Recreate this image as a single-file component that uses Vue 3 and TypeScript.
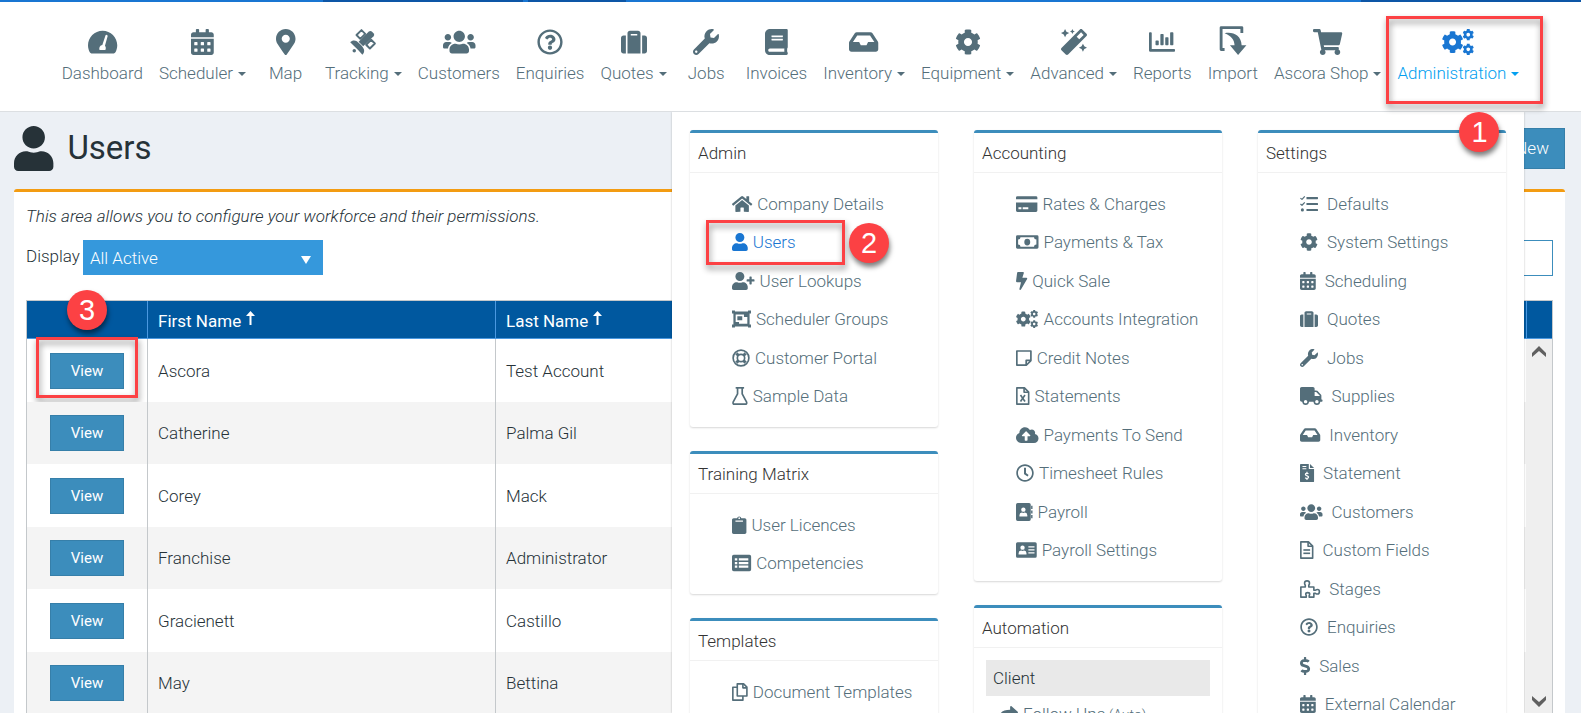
<script setup lang="ts">
import { computed, defineComponent, h, ref } from 'vue'

interface Glyph { w: number; fill?: string[]; line?: string[]; sw?: number }

const USER = 'M224 256c70.7 0 128-57.3 128-128S294.7 0 224 0 96 57.3 96 128s57.3 128 128 128zm89.6 32h-16.7c-22.2 10.2-46.9 16-72.9 16s-50.6-5.8-72.9-16h-16.7C60.2 288 0 348.2 0 422.4V464c0 26.5 21.5 48 48 48h352c26.5 0 48-21.5 48-48v-41.6c0-74.2-60.2-134.4-134.4-134.4z'
const COG = 'M487.4 315.7l-42.6-24.6c4.3-23.2 4.3-47 0-70.2l42.6-24.6c4.9-2.8 7.1-8.6 5.5-14-11.1-35.6-30-67.8-54.7-94.6-3.8-4.1-10-5.1-14.8-2.3L380.8 110c-17.9-15.4-38.5-27.3-60.8-35.1V25.8c0-5.6-3.9-10.5-9.4-11.7-36.7-8.2-74.3-7.8-109.2 0-5.5 1.2-9.4 6.1-9.4 11.7V75c-22.2 7.9-42.8 19.8-60.8 35.1L88.7 85.5c-4.9-2.8-11-1.9-14.8 2.3-24.7 26.7-43.6 58.9-54.7 94.6-1.7 5.4.6 11.2 5.5 14L67.3 221c-4.3 23.2-4.3 47 0 70.2l-42.6 24.6c-4.9 2.8-7.1 8.6-5.5 14 11.1 35.6 30 67.8 54.7 94.6 3.8 4.1 10 5.1 14.8 2.3l42.6-24.6c17.9 15.4 38.5 27.3 60.8 35.1v49.2c0 5.6 3.9 10.5 9.4 11.7 36.7 8.2 74.3 7.8 109.2 0 5.5-1.2 9.4-6.1 9.4-11.7v-49.2c22.2-7.9 42.8-19.8 60.8-35.1l42.6 24.6c4.9 2.8 11 1.9 14.8-2.3 24.7-26.7 43.6-58.9 54.7-94.6 1.5-5.5-.7-11.3-5.6-14.1zM256 336c-44.1 0-80-35.9-80-80s35.9-80 80-80 80 35.9 80 80-35.9 80-80 80z'
const cell = (x: number, y: number) => `M${x} ${y + 12}q0-12 12-12h40q12 0 12 12v40q0 12-12 12h-40q-12 0-12-12z`

const glyphs: Record<string, Glyph> = {
  gauge: { w: 576, fill: ['M288 32C128.94 32 0 160.94 0 320c0 52.8 14.25 102.26 39.06 144.8 5.61 9.62 16.3 15.2 27.44 15.2h443c11.14 0 21.83-5.58 27.44-15.2C561.75 422.26 576 372.8 576 320c0-159.06-128.94-288-288-288zM344 130a22 22 0 0 1 42 14L334 328c20 20 22 54 8 84H226c-14-46 10-90 56-96z'] },
  calendar: { w: 448, fill: [`M0 464c0 26.5 21.5 48 48 48h352c26.5 0 48-21.5 48-48V192H0v272z${cell(320, 256)}${cell(320, 384)}${cell(192, 256)}${cell(192, 384)}${cell(64, 256)}${cell(64, 384)}M400 64h-48V16c0-8.8-7.2-16-16-16h-32c-8.8 0-16 7.2-16 16v48H160V16c0-8.8-7.2-16-16-16h-32c-8.8 0-16 7.2-16 16v48H48C21.5 64 0 85.5 0 112v48h448v-48c0-26.5-21.5-48-48-48z`] },
  marker: { w: 384, fill: ['M172.268 501.67C26.97 291.031 0 269.413 0 192 0 85.961 85.961 0 192 0s192 85.961 192 192c0 77.413-26.97 99.031-172.268 309.67-9.535 13.774-29.93 13.773-39.464 0zM192 272c44.183 0 80-35.817 80-80s-35.817-80-80-80-80 35.817-80 80 35.817 80 80 80z'] },
  satellite: { w: 512, sw: 38, fill: ['M4 262C60 200 130 220 190 290C280 370 310 440 244 508L160 412L110 362z', 'M260 340L170 250 370 50Q400 24 430 50L468 88Q490 116 464 142z', 'M50 430a34 34 0 1 0 68 0a34 34 0 1 0-68 0z'], line: ['M128 118L226 22 300 96 202 194z', 'M318 310L416 212 490 286 392 384z'] },
  users: { w: 640, fill: ['M96 224c35.3 0 64-28.7 64-64s-28.7-64-64-64-64 28.7-64 64 28.7 64 64 64zm448 0c35.3 0 64-28.7 64-64s-28.7-64-64-64-64 28.7-64 64 28.7 64 64 64zm32 32h-64c-17.6 0-33.5 7.1-45.1 18.6 40.3 22.1 68.9 62 75.1 109.4h66c17.7 0 32-14.3 32-32v-32c0-35.3-28.7-64-64-64zm-256 0c61.9 0 112-50.1 112-112S381.9 32 320 32 208 82.1 208 144s50.1 112 112 112zm76.8 32h-8.3c-20.8 10-43.9 16-68.5 16s-47.6-6-68.5-16h-8.3C179.6 288 128 339.6 128 403.2V432c0 26.5 21.5 48 48 48h288c26.5 0 48-21.5 48-48v-28.8c0-63.6-51.6-115.2-115.2-115.2zm-223.7-13.4C161.5 263.1 145.6 256 128 256H64c-35.3 0-64 28.7-64 64v32c0 17.7 14.3 32 32 32h65.9c6.3-47.4 34.9-87.3 75.2-109.4z'] },
  question: { w: 512, fill: ['M256 8C119.043 8 8 119.083 8 256c0 136.997 111.043 248 248 248s248-111.003 248-248C504 119.083 392.957 8 256 8zm0 448c-110.532 0-200-89.431-200-200 0-110.495 89.472-200 200-200 110.491 0 200 89.471 200 200 0 110.53-89.431 200-200 200zm107.244-255.2c0 67.052-72.421 68.084-72.421 92.863V300c0 6.627-5.373 12-12 12h-45.647c-6.627 0-12-5.373-12-12v-8.659c0-35.745 27.1-50.034 47.579-61.516 17.561-9.845 28.324-16.541 28.324-29.579 0-17.246-21.999-28.693-39.784-28.693-23.189 0-33.894 10.977-48.942 29.969-4.057 5.12-11.46 6.071-16.666 2.124l-27.824-21.098c-5.107-3.872-6.251-11.066-2.644-16.363C184.846 131.491 214.94 112 261.794 112c49.071 0 101.45 38.304 101.45 88.8zM298 368c0 23.159-18.841 42-42 42s-42-18.841-42-42 18.841-42 42-42 42 18.841 42 42z'] },
  suitcase: { w: 512, fill: ['M128 480h256V80c0-26.5-21.5-48-48-48H176c-26.5 0-48 21.5-48 48v400zm64-384h128v32H192V96zm320 80v256c0 26.5-21.5 48-48 48h-48V128h48c26.5 0 48 21.5 48 48zM96 480H48c-26.5 0-48-21.5-48-48V176c0-26.5 21.5-48 48-48h48v352z'] },
  wrench: { w: 512, fill: ['M507.73 109.1c-2.24-9.03-13.54-12.09-20.12-5.51l-74.36 74.36-67.88-11.31-11.31-67.88 74.36-74.36c6.62-6.62 3.43-17.9-5.66-20.16-47.38-11.74-99.55.91-136.58 37.93-39.64 39.64-50.55 97.1-34.05 147.2L18.74 402.76c-24.99 24.99-24.99 65.51 0 90.5 24.99 24.99 65.51 24.99 90.5 0l213.21-213.21c50.12 16.71 107.47 5.68 147.37-34.22 37.07-37.07 49.7-89.32 37.91-136.73zM64 472c-13.25 0-24-10.75-24-24 0-13.26 10.75-24 24-24s24 10.74 24 24c0 13.25-10.75 24-24 24z'] },
  book: { w: 448, fill: ['M448 360V24c0-13.3-10.7-24-24-24H96C43 0 0 43 0 96v320c0 53 43 96 96 96h328c13.3 0 24-10.7 24-24v-16c0-7.5-3.5-14.3-8.9-18.7-4.2-15.4-4.2-59.3 0-74.7 5.4-4.3 8.9-11.1 8.9-18.6zM128 134c0-3.3 2.7-6 6-6h212c3.3 0 6 2.7 6 6v20c0 3.3-2.7 6-6 6H134c-3.3 0-6-2.7-6-6v-20zm0 64c0-3.3 2.7-6 6-6h212c3.3 0 6 2.7 6 6v20c0 3.3-2.7 6-6 6H134c-3.3 0-6-2.7-6-6v-20zm253.4 250H96c-17.7 0-32-14.3-32-32 0-17.6 14.4-32 32-32h285.4c-1.9 17.1-1.9 46.9 0 64z'] },
  inbox: { w: 576, fill: ['M567.938 243.908L462.25 85.374A48.003 48.003 0 0 0 422.311 64H153.689a48 48 0 0 0-39.938 21.374L8.062 243.908A47.994 47.994 0 0 0 0 270.533V400c0 26.51 21.49 48 48 48h480c26.51 0 48-21.49 48-48V270.533a47.994 47.994 0 0 0-8.062-26.625zM162.252 128h251.497l85.333 128H376l-32 64H232l-32-64H76.918l85.334-128z'] },
  cog: { w: 512, fill: [COG] },
  cogs: { w: 640 },
  magic: { w: 512, fill: ['M224 96l16-32 32-16-32-16-16-32-16 32-32 16 32 16 16 32zM80 160l26.66-53.33L160 80l-53.34-26.67L80 0 53.34 53.33 0 80l53.34 26.67L80 160zm352 128l-26.66 53.33L352 368l53.34 26.67L432 448l26.66-53.33L512 368l-53.34-26.67L432 288zm70.62-193.77L417.77 9.38C411.53 3.12 403.34 0 395.15 0c-8.19 0-16.38 3.12-22.63 9.38L9.38 372.52c-12.5 12.5-12.5 32.76 0 45.25l84.85 84.85c6.25 6.25 14.44 9.37 22.62 9.37 8.19 0 16.38-3.12 22.63-9.37l363.14-363.15c12.5-12.48 12.5-32.75 0-45.24zM359.45 203.46l-50.91-50.91 86.6-86.6 50.91 50.91-86.6 86.6z'] },
  chart: { w: 512, fill: ['M332.8 320h38.4c6.4 0 12.8-6.4 12.8-12.8V172.8c0-6.4-6.4-12.8-12.8-12.8h-38.4c-6.4 0-12.8 6.4-12.8 12.8v134.4c0 6.4 6.4 12.8 12.8 12.8zm96 0h38.4c6.4 0 12.8-6.4 12.8-12.8V76.8c0-6.4-6.4-12.8-12.8-12.8h-38.4c-6.4 0-12.8 6.4-12.8 12.8v230.4c0 6.4 6.4 12.8 12.8 12.8zm-288 0h38.4c6.4 0 12.8-6.4 12.8-12.8v-70.4c0-6.4-6.4-12.8-12.8-12.8h-38.4c-6.4 0-12.8 6.4-12.8 12.8v70.4c0 6.4 6.4 12.8 12.8 12.8zm96 0h38.4c6.4 0 12.8-6.4 12.8-12.8V108.8c0-6.4-6.4-12.8-12.8-12.8h-38.4c-6.4 0-12.8 6.4-12.8 12.8v198.4c0 6.4 6.4 12.8 12.8 12.8zM496 394H54V80c0-8.84-7.16-16-16-16H16C7.16 64 0 71.16 0 80v336c0 17.67 14.33 32 32 32h464c8.84 0 16-7.16 16-16v-22c0-8.84-7.16-16-16-16z'] },
  import: { w: 512, sw: 56, fill: ['M90 84C250 50 420 120 426 322H520L356 512 196 322H286C286 220 220 130 90 84z'], line: ['M90 404H22V-28H430V80'] },
  cart: { w: 576, fill: ['M528.12 301.319l47.273-208C578.806 78.301 567.391 64 551.99 64H159.208l-9.166-44.81C147.758 8.021 137.93 0 126.529 0H24C10.745 0 0 10.745 0 24v16c0 13.255 10.745 24 24 24h69.883l70.248 343.435C147.325 417.1 136 435.222 136 456c0 30.928 25.072 56 56 56s56-25.072 56-56c0-15.674-6.447-29.835-16.824-40h209.647C430.447 426.165 424 440.326 424 456c0 30.928 25.072 56 56 56s56-25.072 56-56c0-22.172-12.888-41.332-31.579-50.405l5.517-24.276c3.413-15.018-8.002-29.319-23.403-29.319H218.117l-6.545-32h293.145c11.206 0 20.92-7.754 23.403-18.681z'] },
  user: { w: 448, fill: [USER] },
  userPlus: { w: 640, fill: [USER, 'M624 208h-64v-64c0-8.8-7.2-16-16-16h-32c-8.8 0-16 7.2-16 16v64h-64c-8.8 0-16 7.2-16 16v32c0 8.8 7.2 16 16 16h64v64c0 8.8 7.2 16 16 16h32c8.8 0 16-7.2 16-16v-64h64c8.8 0 16-7.2 16-16v-32c0-8.8-7.2-16-16-16z'] },
  home: { w: 576, fill: ['M280.37 148.26L96 300.11V464a16 16 0 0 0 16 16l112.06-.29a16 16 0 0 0 15.92-16V368a16 16 0 0 1 16-16h64a16 16 0 0 1 16 16v95.64a16 16 0 0 0 16 16.05L464 480a16 16 0 0 0 16-16V300L295.67 148.26a12.19 12.19 0 0 0-15.3 0zM571.6 251.47L488 182.56V44.05a12 12 0 0 0-12-12h-56a12 12 0 0 0-12 12v72.61L318.47 43a48 48 0 0 0-61 0L4.34 251.47a12 12 0 0 0-1.6 16.9l25.5 31A12 12 0 0 0 45.15 301l235.22-193.74a12.19 12.19 0 0 1 15.3 0L530.9 301a12 12 0 0 0 16.9-1.6l25.5-31a12 12 0 0 0-1.7-16.93z'] },
  group: { w: 540, fill: ['M40 40H500V472H40zM104 130V340H200V394H436V200H340V130zM152 176H292V292H152z', 'M0 16H84V100H0zM456 16H540V100H456zM0 412H84V496H0zM456 412H540V496H456z'] },
  ring: { w: 512, sw: 48, fill: ['M92 158L158 92 216 160 160 216zM354 92L420 158 352 216 296 160zM92 354L158 420 216 352 160 296zM354 420L420 354 352 296 296 352z'], line: ['M32 256a224 224 0 1 0 448 0a224 224 0 1 0-448 0z', 'M152 256a104 104 0 1 0 208 0a104 104 0 1 0-208 0z'] },
  flask: { w: 448, sw: 48, line: ['M104 24H344', 'M158 24V196L32 430Q18 488 72 488H376Q430 488 416 430L290 196V24'] },
  clipboard: { w: 410, fill: ['M362 64H266a62 62 0 0 0-122 0H48C21 64 0 85 0 112v352c0 27 21 48 48 48h314c27 0 48-21 48-48V112c0-27-21-48-48-48zM205 38a24 24 0 1 1 0 48 24 24 0 0 1 0-48zM98 130h214v32H98z'] },
  list: { w: 544, fill: ['M48 24h448q48 0 48 48v368q0 48-48 48H48q-48 0-48-48V72q0-48 48-48zM80 120h70v64H80zM80 224h70v64H80zM80 328h70v64H80zM194 120h270v64H194zM194 224h270v64H194zM194 328h270v64H194z'] },
  copy: { w: 448, sw: 46, line: ['M150 24H330L424 118V370H150z', 'M310 24V138H424', 'M150 120H24V488H310V370'] },
  card: { w: 608, fill: ['M0 72q0-40 40-40h528q40 0 40 40v48H0zM0 216h608v224q0 40-40 40H40q-40 0-40-40zM70 350v54h84v-54zM190 350v54h160v-54z'] },
  money: { w: 640, fill: ['M40 64h560q40 0 40 40v304q0 40-40 40H40q-40 0-40-40V104q0-40 40-40zM128 120q0 64-68 64V328q68 0 68 64H512q0-64 68-64V184q-68 0-68-64zM320 160q84 0 84 96t-84 96-84-96 84-96z'] },
  bolt: { w: 320, fill: ['M296 160H180.6l42.6-129.8C227.2 15 215.7 0 200 0H56C44 0 33.8 8.9 32.2 20.8l-32 240C-1.7 275.2 9.5 288 24 288h118.7L96.6 482.5c-3.6 15.2 8 29.5 23.3 29.5 8.4 0 16.4-4.4 20.8-12l176-304c9.3-15.9-2.2-36-20.7-36z'] },
  note: { w: 448, sw: 48, line: ['M24 56H424V330L300 456H24z', 'M290 456V322H424'] },
  excel: { w: 384, sw: 46, line: ['M24 24H240L360 144V488H24z', 'M230 24V150H360', 'M128 226L256 410', 'M256 226L128 410'] },
  cloud: { w: 640, fill: ['M537.6 226.6c4.1-10.7 6.4-22.4 6.4-34.6 0-53-43-96-96-96-19.7 0-38.1 6-53.3 16.2C367 64.2 315.3 32 256 32c-88.4 0-160 71.6-160 160 0 2.7.1 5.4.2 8.1C40.2 219.8 0 273.2 0 336c0 79.5 64.5 144 144 144h368c70.7 0 128-57.3 128-128 0-61.9-44-113.6-102.4-125.4zM393.4 288H328v112c0 8.8-7.2 16-16 16h-48c-8.8 0-16-7.2-16-16V288h-65.4c-14.3 0-21.4-17.2-11.3-27.3l105.4-105.4c6.2-6.2 16.4-6.2 22.6 0l105.4 105.4c10.1 10.1 2.9 27.3-11.3 27.3z'] },
  clock: { w: 512, fill: ['M256 8C119 8 8 119 8 256s111 248 248 248 248-111 248-248S393 8 256 8zm0 448c-110.5 0-200-89.5-200-200S145.5 56 256 56s200 89.5 200 200-89.5 200-200 200zm61.8-104.4l-84.9-61.7c-3.1-2.3-4.9-5.9-4.9-9.7V116c0-6.6 5.4-12 12-12h32c6.6 0 12 5.4 12 12v141.7l66.8 48.6c5.4 3.9 6.5 11.4 2.6 16.8L334.6 349c-3.9 5.3-11.4 6.5-16.8 2.6z'] },
  addressBook: { w: 470, fill: ['M48 0h324q48 0 48 48v416q0 48-48 48H48q-48 0-48-48V48q0-48 48-48zM210 128a62 62 0 1 0 0 124 62 62 0 0 0 0-124zM98 384h224v-36q0-70-70-76-42 18-84 0-70 6-70 76z', 'M430 80h40v90h-40zM430 211h40v90h-40zM430 342h40v90h-40z'] },
  idCard: { w: 590, fill: ['M44 32h502q44 0 44 44v360q0 44-44 44H44q-44 0-44-44V76q0-44 44-44zM186 128a62 62 0 1 0 0 124 62 62 0 0 0 0-124zM74 384h224v-36q0-70-70-76-42 18-84 0-70 6-70 76zM352 150h174v36H352zM352 236h174v36H352zM352 322h174v36H352z'] },
  share: { w: 512, fill: ['M503.7 189.8L327.7 37.9C312.3 24.5 288 35.3 288 56v80C127.4 137.9 0 170.1 0 322.3c0 61.5 39.6 122.3 83.3 154.1 13.7 9.9 33.1-2.5 28.1-18.6C66.1 312.8 132.9 274.3 288 272.1V360c0 20.7 24.3 31.5 39.7 18.1l176-152c11.1-9.6 11.1-26.7 0-36.3z'] },
  tasks: { w: 512, sw: 34, fill: ['M184 60h312q16 0 16 16v26q0 16-16 16H184zM184 228h312q16 0 16 16v26q0 16-16 16H184zM184 396h312q16 0 16 16v26q0 16-16 16H184zM24 424a44 44 0 1 0 88 0a44 44 0 1 0-88 0z'], line: ['M12 88L56 124 136 40', 'M12 256L56 292 136 208'] },
  truck: { w: 640, fill: ['M624 352h-16V243.9c0-12.7-5.1-24.9-14.1-33.9L494 110.1c-9-9-21.2-14.1-33.9-14.1H416V48c0-26.5-21.5-48-48-48H48C21.5 0 0 21.5 0 48v320c0 26.5 21.5 48 48 48h16c0 53 43 96 96 96s96-43 96-96h128c0 53 43 96 96 96s96-43 96-96h48c8.8 0 16-7.2 16-16v-32c0-8.8-7.2-16-16-16zM160 464c-26.5 0-48-21.5-48-48s21.5-48 48-48 48 21.5 48 48-21.5 48-48 48zm320 0c-26.5 0-48-21.5-48-48s21.5-48 48-48 48 21.5 48 48-21.5 48-48 48zm80-208H416V144h44.1l99.9 99.9V256z'] },
  invoice: { w: 400, fill: ['M24 0H250V140H400V488q0 24-24 24H24q-24 0-24-24V24Q0 0 24 0zM70 58v30h110v-30zM70 120v30h110v-30zM182 220v28q-46 8-46 52 0 36 50 50 36 10 36 24 0 18-24 18-22 0-42-16l-20 26q20 18 46 22v28h32v-28q46-8 46-52 0-38-52-52-34-10-34-22 0-16 22-16 18 0 34 12l20-26q-16-14-36-20v-28z', 'M284 0L400 112H284z'] },
  fileAlt: { w: 384, sw: 46, line: ['M24 24H240L360 144V488H24z', 'M230 24V150H360', 'M96 256H288', 'M96 350H288'] },
  puzzle: { w: 576, sw: 46, line: ['M24 200H150V150Q130 120 130 90 130 26 200 26T270 90Q270 120 250 150V200H394V290H440Q470 270 500 270 552 270 552 335T500 400Q470 400 440 380H394V488H262V440Q276 420 276 400 276 360 220 360T164 400Q164 420 178 440V488H24z'] },
  dollar: { w: 288, fill: ['M209.2 233.4l-108-31.6C88.7 198.2 80 186.5 80 173.5c0-16.3 13.2-29.5 29.5-29.5h66.3c12.2 0 24.2 3.7 34.2 10.5 6.1 4.1 14.3 3.1 19.5-2l34.8-34c7.1-6.9 6.1-18.4-1.8-24.5C238 74.8 207.4 64.1 176 64V16c0-8.8-7.2-16-16-16h-32c-8.8 0-16 7.2-16 16v48h-2.5C45.8 64-5.4 118.7.5 183.6c4.2 46.1 39.4 83.6 83.8 96.6l102.5 30c12.5 3.7 21.2 15.3 21.2 28.3 0 16.3-13.2 29.5-29.5 29.5h-66.3C100 368 88 364.3 78 357.5c-6.1-4.1-14.3-3.1-19.5 2l-34.8 34c-7.1 6.9-6.1 18.4 1.8 24.5 24.5 19.2 55.1 29.9 86.5 30v48c0 8.8 7.2 16 16 16h32c8.8 0 16-7.2 16-16v-48.2c46.6-.9 90.3-28.6 105.7-72.7 21.5-61.6-14.6-124.8-72.5-141.7z'] },
}

const Icon = defineComponent({
  props: { name: { type: String, required: true } },
  setup(props) {
    return () => {
      const g = glyphs[props.name]
      const kids = props.name === 'cogs'
        ? ['translate(-12 38) scale(.86)', 'translate(402 -4) scale(.45)', 'translate(402 286) scale(.45)'].map(transform => h('path', { d: COG, transform, 'fill-rule': 'evenodd' }))
        : [
            ...(g.fill ?? []).map(d => h('path', { d, 'fill-rule': 'evenodd' })),
            ...(g.line ?? []).map(d => h('path', { d, fill: 'none', stroke: 'currentColor', 'stroke-width': g.sw, 'stroke-linejoin': 'round' })),
          ]
      return h('svg', { class: 'icon', viewBox: `0 0 ${g.w} 512`, fill: 'currentColor', 'aria-hidden': 'true' }, kids)
    }
  },
})

const nav = [
  { label: 'Dashboard', icon: 'gauge' },
  { label: 'Scheduler', icon: 'calendar', menu: true },
  { label: 'Map', icon: 'marker' },
  { label: 'Tracking', icon: 'satellite', menu: true },
  { label: 'Customers', icon: 'users' },
  { label: 'Enquiries', icon: 'question' },
  { label: 'Quotes', icon: 'suitcase', menu: true },
  { label: 'Jobs', icon: 'wrench' },
  { label: 'Invoices', icon: 'book' },
  { label: 'Inventory', icon: 'inbox', menu: true },
  { label: 'Equipment', icon: 'cog', menu: true },
  { label: 'Advanced', icon: 'magic', menu: true },
  { label: 'Reports', icon: 'chart' },
  { label: 'Import', icon: 'import' },
  { label: 'Ascora Shop', icon: 'cart', menu: true },
  { label: 'Administration', icon: 'cogs', menu: true, active: true, step: 1 },
]

interface Item { label: string; icon: string; step?: number }
interface Card { title: string; items: Item[]; sub?: string; wide?: boolean }
const list = (...rows: [string, string][]): Item[] => rows.map(([icon, label]) => ({ icon, label }))

const columns: Card[][] = [
  [
    {
      title: 'Admin',
      items: [
        { icon: 'home', label: 'Company Details' },
        { icon: 'user', label: 'Users', step: 2 },
        ...list(['userPlus', 'User Lookups'], ['group', 'Scheduler Groups'], ['ring', 'Customer Portal'], ['flask', 'Sample Data']),
      ],
    },
    { title: 'Training Matrix', items: list(['clipboard', 'User Licences'], ['list', 'Competencies']) },
    { title: 'Templates', items: list(['copy', 'Document Templates']) },
  ],
  [
    {
      title: 'Accounting',
      items: list(['card', 'Rates & Charges'], ['money', 'Payments & Tax'], ['bolt', 'Quick Sale'], ['cogs', 'Accounts Integration'], ['note', 'Credit Notes'], ['excel', 'Statements'], ['cloud', 'Payments To Send'], ['clock', 'Timesheet Rules'], ['addressBook', 'Payroll'], ['idCard', 'Payroll Settings']),
    },
    { title: 'Automation', sub: 'Client', items: list(['share', 'Follow Ups']) },
  ],
  [
    {
      title: 'Settings',
      wide: true,
      items: list(['tasks', 'Defaults'], ['cog', 'System Settings'], ['calendar', 'Scheduling'], ['suitcase', 'Quotes'], ['wrench', 'Jobs'], ['truck', 'Supplies'], ['inbox', 'Inventory'], ['invoice', 'Statement'], ['users', 'Customers'], ['fileAlt', 'Custom Fields'], ['puzzle', 'Stages'], ['question', 'Enquiries'], ['dollar', 'Sales'], ['calendar', 'External Calendar']),
    },
  ],
]

const display = ref('All Active')
const search = ref('')
const people = [
  ['Ascora', 'Test Account'],
  ['Catherine', 'Palma Gil'],
  ['Corey', 'Mack'],
  ['Franchise', 'Administrator'],
  ['Gracienett', 'Castillo'],
  ['May', 'Bettina'],
]
const shown = computed(() => people.filter(p => p.join(' ').toLowerCase().includes(search.value.toLowerCase())))
</script>

<template>
  <div class="app">
    <header class="top">
      <div class="strip"></div>
      <nav class="nav" aria-label="Main">
        <a v-for="n in nav" :key="n.label" href="#" class="nav-item" :class="{ active: n.active }">
          <Icon :name="n.icon" />
          <span class="nav-label">{{ n.label }}<i v-if="n.menu" class="caret"></i></span>
          <template v-if="n.step">
            <span class="mark mark-nav"></span>
            <span class="step step-nav">{{ n.step }}</span>
          </template>
        </a>
      </nav>
    </header>

    <main class="page">
      <div class="heading">
        <Icon name="user" />
        <h1>Users</h1>
        <button type="button" class="btn btn-new">New</button>
      </div>

      <section class="panel">
        <p class="intro">This area allows you to configure your workforce and their permissions.</p>
        <div class="tools">
          <label for="display">Display</label>
          <div class="picker">
            <select id="display" v-model="display">
              <option>All Active</option>
              <option>All Inactive</option>
            </select>
            <svg class="tri" viewBox="0 0 10 8" aria-hidden="true"><path d="M0 0h10L5 8z" fill="#fff" /></svg>
          </div>
          <input v-model="search" class="search" type="text" aria-label="Search users" />
        </div>

        <div class="grid">
          <table>
            <colgroup><col class="c-act" /><col class="c-first" /><col /></colgroup>
            <thead>
              <tr>
                <th scope="col"><span class="step step-head">3</span></th>
                <th v-for="t in ['First Name', 'Last Name']" :key="t" scope="col">
                  {{ t }}<svg class="sort" viewBox="0 0 9 14" aria-hidden="true"><path d="M4.5 0L9 5H5.500V14H3.500V5H0z" fill="#fff" /></svg>
                </th>
              </tr>
            </thead>
            <tbody>
              <tr v-for="(p, i) in shown" :key="p[0]">
                <td class="act">
                  <button type="button" class="btn btn-view">View</button>
                  <span v-if="i === 0" class="mark mark-view"></span>
                </td>
                <td>{{ p[0] }}</td>
                <td>{{ p[1] }}</td>
              </tr>
            </tbody>
          </table>
          <div class="scroll">
            <div class="scroll-head"></div>
            <button type="button" aria-label="Scroll up"><svg viewBox="0 0 14 11"><path d="M0 7L7 0 14 7V11L7 5 0 11z" /></svg></button>
            <button type="button" aria-label="Scroll down"><svg viewBox="0 0 14 11"><path d="M0 4L7 11 14 4V0L7 6 0 0z" /></svg></button>
          </div>
        </div>
      </section>

      <div class="mega">
        <div v-for="(col, c) in columns" :key="c" class="col">
          <section v-for="card in col" :key="card.title" class="card" :class="{ wide: card.wide }">
            <h2>{{ card.title }}</h2>
            <h3 v-if="card.sub">{{ card.sub }}</h3>
            <ul :class="{ nested: card.sub }">
              <li v-for="it in card.items" :key="it.label">
                <a href="#" :class="{ active: it.step }">
                  <Icon :name="it.icon" />
                  <span>{{ it.label }}<small v-if="card.sub"> (Auto)</small></span>
                </a>
                <template v-if="it.step">
                  <span class="mark mark-menu"></span>
                  <span class="step step-menu">{{ it.step }}</span>
                </template>
              </li>
            </ul>
          </section>
        </div>
      </div>
    </main>
  </div>
</template>

<style>
html,
body {
  margin: 0;
  overflow: hidden;
}
.icon {
  display: block;
  flex: none;
  height: 18px;
  overflow: visible;
}
</style>

<style scoped>
.app {
  display: flex;
  flex-direction: column;
  height: 100vh;
  overflow: hidden;
  font: 300 17px/20px Roboto, "Liberation Sans", sans-serif;
  color: #263238;
  background: #ecf0f5;
}
.app *,
.app *::before {
  box-sizing: border-box;
}
a {
  color: #546e7a;
  text-decoration: none;
}
button,
input,
select {
  font: inherit;
  border-radius: 0;
}

.top {
  position: relative;
  z-index: 3;
  flex: none;
  background: #fff;
  border-bottom: 1px solid #dcdfe2;
}
.strip {
  height: 2px;
  background: linear-gradient(90deg, #1976d2 20.4%, #0d56a6 20.4% 33.1%, #1976d2 33.1% 33.4%, #0d56a6 33.4% 39.6%, #1976d2 39.6% 86.1%, #0d56a6 86.1%);
}
.nav {
  display: flex;
  justify-content: center;
  height: 109px;
  padding-top: 27px;
}
.nav-item {
  position: relative;
  display: flex;
  flex-direction: column;
  align-items: center;
  min-width: 63px;
  padding: 0 8px;
}
.nav-item .icon {
  height: 26px;
  margin-bottom: 8px;
}
.nav-label {
  white-space: nowrap;
}
.nav-item.active {
  color: #03a0f0;
}
.nav-item.active .icon {
  color: #1976d2;
}
.caret {
  display: inline-block;
  margin-left: 5px;
  vertical-align: 3px;
  border: 4px solid transparent;
  border-top-color: currentColor;
  border-bottom: 0;
}

.mark {
  position: absolute;
  border: 3px solid #fc4144;
  filter: drop-shadow(1px 4px 3px rgba(0, 0, 0, 0.45));
  pointer-events: none;
}
.step {
  position: absolute;
  width: 40px;
  height: 40px;
  border-radius: 50%;
  background: #fc4144;
  box-shadow: 1px 4px 5px rgba(0, 0, 0, 0.5);
  color: #fff;
  font: 400 29px/40px "Liberation Sans", sans-serif;
  text-align: center;
}
.mark-nav {
  top: -13px;
  left: -3px;
  width: 157px;
  height: 88px;
}
.step-nav {
  top: 83px;
  left: 70px;
}
.mark-menu {
  top: -3px;
  left: 16px;
  width: 139px;
  height: 45px;
}
.step-menu {
  top: 0;
  left: 159px;
}
.mark-view {
  top: -2px;
  left: 9px;
  width: 102px;
  height: 61px;
}
.step-head {
  top: -11px;
  left: 40px;
}

.page {
  position: relative;
  flex: 1;
  min-height: 0;
  display: flex;
  flex-direction: column;
  padding: 0 16px 0 14px;
}
.heading {
  display: flex;
  align-items: center;
  flex: none;
  height: 77px;
  padding-bottom: 5px;
}
.heading .icon {
  height: 45px;
}
h1 {
  margin: 0 auto 0 14px;
  font-size: 33px;
  font-weight: 400;
  line-height: 40px;
}
.btn {
  background: #3c8dbc;
  border: 1px solid #367fa9;
  color: #fff;
}
.btn-new {
  height: 41px;
  padding: 0 15px;
}
.panel {
  flex: 1;
  min-height: 0;
  display: flex;
  flex-direction: column;
  padding: 14px 12px 0;
  background: #fff;
  border-top: 3px solid #f39c12;
  border-radius: 3px 3px 0 0;
}
.intro {
  margin: 0 0 14px;
  font-style: italic;
}
.tools {
  display: flex;
  flex: none;
  gap: 3px;
  margin-bottom: 24px;
}
.tools label {
  line-height: 32px;
}
.picker {
  position: relative;
  width: 240px;
}
.picker select {
  width: 100%;
  height: 35px;
  padding: 0 7px;
  appearance: none;
  border: 0;
  background: #3598dc;
  color: #fff;
}
.tri {
  position: absolute;
  top: 16px;
  right: 12px;
  width: 10px;
  height: 8px;
}
.search {
  width: 240px;
  height: 36px;
  margin-left: auto;
  border: 1px solid #3c8dbc;
  background: #fff;
}
.grid {
  flex: 1;
  min-height: 0;
  display: flex;
  align-items: flex-start;
  border: 1px solid #c4c8cb;
  border-bottom: 0;
}
table {
  flex: 1;
  table-layout: fixed;
  border-collapse: separate;
  border-spacing: 0;
}
.c-act {
  width: 121px;
}
.c-first {
  width: 348px;
}
th {
  position: relative;
  height: 38px;
  padding: 2px 10px 0;
  background: #00589f;
  border-bottom: 1px solid #4a98e0;
  border-right: 1px solid #4a98e0;
  color: #fff;
  font-weight: 400;
  text-align: left;
}
td {
  height: 62px;
  padding: 0 10px;
  border-right: 1px solid #c4c8cb;
}
tr > :last-child {
  border-right: 0;
}
tbody tr:nth-child(odd) td {
  height: 63px;
}
tbody tr:nth-child(even) td {
  background: #f4f4f4;
}
.sort {
  width: 9px;
  height: 14px;
  margin-left: 5px;
  vertical-align: 2px;
}
td.act {
  position: relative;
  text-align: center;
}
.btn-view {
  width: 74px;
  height: 36px;
  padding: 0;
  font-size: 15px;
  font-weight: 400;
}
.scroll {
  align-self: stretch;
  display: flex;
  flex-direction: column;
  flex: none;
  width: 26px;
  background: #efefef;
}
.scroll-head {
  height: 38px;
  background: #00589f;
  border-left: 1px solid #4a98e0;
  border-bottom: 1px solid #4a98e0;
}
.scroll button {
  height: 24px;
  padding: 0;
  border: 0;
  background: none;
}
.scroll button + button {
  margin-top: auto;
}
.scroll svg {
  display: block;
  width: 14px;
  height: 11px;
  margin: 0 auto;
  fill: #606060;
}

.mega {
  position: absolute;
  z-index: 2;
  top: 0;
  bottom: 0;
  right: 57px;
  display: grid;
  grid-template-columns: repeat(3, 248px);
  gap: 36px;
  padding: 18px;
  overflow: hidden;
  background: #fff;
  box-shadow: 0 0 2px rgba(0, 0, 0, 0.25);
}
.card {
  margin-bottom: 24px;
  border-top: 3px solid #3c8dbc;
  border-radius: 3px;
  box-shadow: 0 1px 2px rgba(0, 0, 0, 0.16);
}
h2,
h3 {
  margin: 0;
  font-size: 17px;
  font-weight: 300;
}
h2 {
  padding: 10px 8px 9px;
  border-bottom: 1px solid #f1f1f1;
  color: #333;
}
h3 {
  margin: 12px 12px 0;
  padding: 8px 7px;
  background: #e9e9e9;
}
ul {
  margin: 0;
  padding: 11px 0 12px;
  list-style: none;
}
ul.nested {
  padding: 0;
}
li {
  position: relative;
  padding-left: 42px;
}
.nested li {
  padding-left: 26px;
}
li a {
  display: flex;
  align-items: center;
  gap: 5px;
  height: 38px;
  white-space: nowrap;
}
li:nth-child(odd) a {
  height: 39px;
}
.nested li:nth-child(odd) a {
  height: 36px;
}
.wide li a {
  gap: 9px;
}
li a.active {
  color: #1976d2;
}
small {
  font-size: 14px;
}
</style>
